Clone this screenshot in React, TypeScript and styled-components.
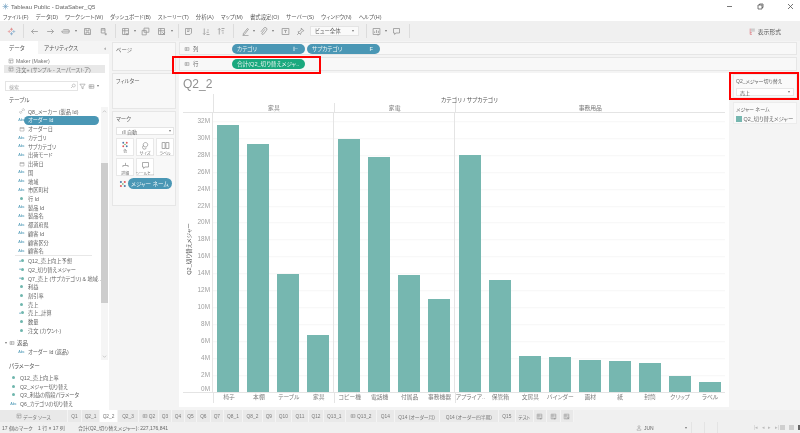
import React from "react";
import styled, { createGlobalStyle } from "styled-components";

const Global = createGlobalStyle`
  html, body { margin: 0; padding: 0; background: #f2f2f2; }
  * { box-sizing: border-box; }
  #root { width: 800px; height: 433px; }
`;

const FONT = `"Liberation Sans", "Noto Sans CJK JP", sans-serif`;
const BLUE = "#4a97b5";
const LINE = "#e4e4e4";

const Page = styled.div`
  position: relative; width: 800px; height: 433px; overflow: hidden;
  display: flex; flex-direction: column;
  background: #f4f4f4; font-family: ${FONT}; font-size: 5.6px; color: #5c5c5c;
  white-space: nowrap; font-feature-settings: "palt";
  filter: blur(0.25px);
`;
const TitleBar = styled.div`
  height: 12px; flex: none; background: #fff; display: flex; align-items: center; padding: 1px 0 0 2px; gap: 2px;
`;
const AppTitle = styled.span` font-size: 6px; color: #666; `;
const WinControls = styled.div`
  margin-left: auto; display: flex; width: 72px; margin-right: 2px; justify-content: space-between; padding: 0 4px 0 0; 
`;
const WinBtn = styled.svg` width: 7px; height: 7px; fill: none; stroke: #555; stroke-width: 0.8; `;
const MenuBar = styled.div`
  height: 9px; flex: none; background: #fff; display: flex; align-items: center; padding-left: 3px; gap: 7px;
`;
const MenuItem = styled.span` font-size: 5.4px; color: #5a5a5a; `;
const Toolbar = styled.div`
  height: 20px; background: #f0f0f0; display: flex; align-items: center; flex: none;
`;
const Slot = styled.div<{ $w: number }>`
  width: ${(p) => p.$w}px; flex: none; display: flex; justify-content: center; align-items: center; height: 100%;
`;
const ToolSep = styled.div<{ $l?: number; $r?: number }>`
  width: 1px; height: 14px; background: #dcdcdc; flex: none;
  margin: 0 ${(p) => p.$r ?? 0}px 0 ${(p) => p.$l ?? 0}px;
`;
const Ic = styled.svg<{ $s?: number }>`
  width: ${(p) => p.$s ?? 9}px; height: ${(p) => p.$s ?? 9}px; fill: none; stroke: #929292; stroke-width: 1; flex: none;
`;
const Caret = styled.span`
  width: 0; height: 0; border-left: 1.5px solid transparent; border-right: 1.5px solid transparent;
  border-top: 2px solid #777; display: inline-block; flex: none;
`;
const ViewSelect = styled.div`
  width: 49px; height: 10px; margin-left: 6px; background: #fafafa; border: 1px solid #e4e4e4;
  display: flex; align-items: center; justify-content: space-between; padding: 0 4px; font-size: 5.4px; color: #666; flex: none;
`;
const FormatBtn = styled.div`
  margin-left: auto; margin-right: 19px; display: flex; align-items: center; gap: 2px; font-size: 5.8px; color: #555;
`;
const Main = styled.div` flex: none; height: 369px; display: flex; `;
const LeftPane = styled.div` width: 109px; background: #fff; display: flex; flex-direction: column; flex: none; `;
const PaneTabs = styled.div` height: 13px; display: flex; flex: none; `;
const PaneTab = styled.div<{ $active?: boolean }>`
  width: ${(p) => (p.$active ? 38 : 71)}px; display: flex; align-items: center; gap: 0; justify-content: space-between;
  padding: 0 3px 0 ${(p) => (p.$active ? 9 : 6)}px; font-size: 5.6px; color: #555;
  background: ${(p) => (p.$active ? "#fff" : "#f4f4f4")};
`;
const SourceList = styled.div` padding: 3px 4px 0; display: flex; flex-direction: column; `;
const SourceRow = styled.div<{ $on?: boolean }>`
  height: 8px; display: flex; align-items: center; gap: 2px; padding-left: 4px; font-size: 5.2px; color: #777;
  background: ${(p) => (p.$on ? "#e8e8e8" : "transparent")};
`;
const SearchRow = styled.div` display: flex; align-items: center; margin: 8px 0 0 5px; `;
const SearchBox = styled.div`
  width: 73px; height: 10px; border: 1px solid #e4e4e4; display: flex; align-items: center; justify-content: space-between;
  padding: 0 1px 0 3px; color: #aaa; font-size: 5px;
`;
const SearchTools = styled.div` display: flex; align-items: center; gap: 2px; margin-left: 1px; `;
const SectionLabel = styled.div` height: 10px; margin: 4px 0 2px 9px; line-height: 10px; font-size: 5.6px; color: #555; flex: none; `;
const ListWrap = styled.div` flex: 1; min-height: 0; display: flex; overflow: hidden; `;
const FieldList = styled.div` flex: 1; min-width: 0; overflow: hidden; `;
const FieldRow = styled.div`
  height: 8.73px; display: flex; align-items: center; padding-left: 17px; font-size: 5.2px; color: #5f5f5f;
`;
const FieldName = styled.span<{ $sel?: boolean }>`
  margin-left: ${(p) => (p.$sel ? "-1px" : "2px")};
  ${(p) => p.$sel ? `background:${BLUE};color:#eef6f9;width:75px;height:9px;line-height:9px;border-radius:5px;padding-left:4px;margin-left:-2px;` : ""}
`;
const KindBox = styled.span`
  width: 9px; flex: none; display: flex; justify-content: center; align-items: center; font-size: 3.8px; color: #4a97b5;
`;
const Dot = styled.span` width: 3px; height: 3px; border-radius: 50%; background: #6fb6ad; display: block; `;
const FieldSep = styled.div` height: 1px; margin: 0 9px 0 15px; background: #e8e8e8; `;
const GroupRow = styled.div`
  height: 8.73px; margin-top: 4px; display: flex; align-items: center; gap: 2px; padding-left: 5px; font-size: 5.4px; color: #555;
`;
const ChildRow = styled(FieldRow)``;
const Scroll = styled.div`
  width: 7px; flex: none; background: #f5f5f5; display: flex; flex-direction: column; align-items: center; padding-top: 2px; margin-right: 1px;
  justify-content: space-between; position: relative; padding-bottom: 1px;
`;
const Thumb = styled.div` position: absolute; left: 0; right: 0; top: 56px; height: 140px; background: #cdcdcd; `;
const ParamPane = styled.div` height: 50px; flex: none; padding-top: 2px; background: #fff; `;
const ParamTitle = styled.div` height: 9px; line-height: 9px; padding-left: 9px; font-size: 5.6px; color: #555; margin-bottom: 2px; `;
const ParamRow = styled(FieldRow)` padding-left: 9px; `;
const Cards = styled.div` width: 64px; margin: 1px 0 0 3px; display: flex; flex-direction: column; gap: 2px; flex: none; `;
const Card = styled.div<{ $h: number }>`
  height: ${(p) => p.$h}px; background: #f8f8f8; border: 1px solid #e6e6e6; padding: 3px; font-size: 5.4px; color: #666; flex: none;
`;
const MarkSelect = styled.div`
  height: 8px; margin: 4px 0 3px 0; width: 58px; background: #fff; border: 1px solid #e4e4e4; display: flex; align-items: center;
  justify-content: space-between; padding: 0 2px 0 5px; font-size: 5px;
`;
const MarkGrid = styled.div` display: grid; grid-template-columns: repeat(3, 18.3px); gap: 2px 1.7px; `;
const MarkBtn = styled.div`
  height: 18px; background: #fff; border: 1px solid #e8e8e8; display: flex; flex-direction: column; align-items: center;
  justify-content: space-between; padding: 2px 0 1px; font-size: 4px; color: #777;
`;
const MarkPillRow = styled.div` display: flex; align-items: center; gap: 1px; margin: 2px 0 0 3px; `;
const MarkPill = styled.div`
  width: 46px; height: 11px; border-radius: 6px; background: ${BLUE}; color: #eef6f9; font-size: 5.6px;
  display: flex; align-items: center; justify-content: center;
`;
const Right = styled.div` flex: 1; min-width: 0; margin: 1px 3px 0 3px; display: flex; flex-direction: column; `;
const Shelf = styled.div<{ $h: number; $mb: number }>`
  height: ${(p) => p.$h}px; margin-bottom: ${(p) => p.$mb}px; background: #f8f8f8; border: 1px solid #e6e6e6; display: flex; align-items: center; gap: 2px; flex: none;
`;
const ShelfLabel = styled.div`
  width: 50px; display: flex; align-items: center; gap: 3px; padding-left: 4px; font-size: 5.4px; color: #666;
`;
const Pill = styled.div<{ $c: string }>`
  width: 73px; height: 10px; border-radius: 6px; background: ${(p) => p.$c}; color: #eef6f4; font-size: 5.6px;
  display: flex; align-items: center; justify-content: space-between; padding: 0 7px 0 5px;
`;
const Lower = styled.div` flex: 1; min-height: 0; display: flex; `;
const View = styled.div` width: 550px; height: 334px; background: #fff; padding: 0 4px; display: flex; flex-direction: column; flex: none; `;
const SheetTitle = styled.div` height: 21px; font-size: 12px; color: #8f8f8f; padding-top: 3px; line-height: 17px; flex: none; `;
const ChartHead = styled.div` margin-left: 30px; border-left: 1px solid ${LINE}; flex: none; `;
const HeadTitle = styled.div` height: 9px; line-height: 12px; text-align: center; font-size: 5.8px; color: #555; `;
const CatRow = styled.div` height: 9px; display: flex; `;
const CatCell = styled.div<{ $n: number }>`
  flex: ${(p) => p.$n} 0 0; text-align: center; line-height: 10px; font-size: 5.8px; color: #777;
  & + & { border-left: 1px solid ${LINE}; }
`;
const Plot = styled.div` height: 281px; display: flex; border-top: 1px solid ${LINE}; border-bottom: 1px solid ${LINE}; flex: none; `;
const Axis = styled.div` width: 30px; display: flex; flex: none; border-right: 1px solid ${LINE}; `;
const AxisTitleBox = styled.div` width: 11px; display: flex; align-items: center; justify-content: center; padding: 0 0 8px 0; flex: none; `;
const AxisTitle = styled.span` transform: rotate(-90deg); font-size: 5.6px; color: #555; display: block; `;
const Ticks = styled.div` flex: 1; display: flex; flex-direction: column; padding-right: 2px; `;
const Tick = styled.div` height: 16.92px; line-height: 16.92px; text-align: right; font-size: 6.4px; color: #a0a0a0; flex: none; `;
const ZeroTick = styled(Tick)` height: 10px; line-height: 10px; `;
const Pane = styled.div<{ $n: number }>`
  flex: ${(p) => p.$n} 0 0; display: flex; align-items: flex-end; min-width: 0;
  background-image: repeating-linear-gradient(to bottom, transparent 0, transparent 15.92px, #f6f6f6 15.92px, #f6f6f6 16.92px);
  background-position: 0 -7.8px;
  & + & { border-left: 1px solid ${LINE}; }
`;
const BarSlot = styled.div` flex: 1; display: flex; justify-content: center; min-width: 0; `;
const Bar = styled.div` width: 22.5px; background: #76b7b0; `;
const LabelsRow = styled.div` height: 10px; margin-left: 30px; display: flex; border-left: 1px solid ${LINE}; flex: none; `;
const LabelGroup = styled.div<{ $n: number }>`
  flex: ${(p) => p.$n} 0 0; display: flex; min-width: 0;
  & + & { border-left: 1px solid ${LINE}; }
`;
const BarLabel = styled.div` flex: 1; min-width: 0; text-align: center; line-height: 9px; font-size: 5.8px; color: #7c7c7c; `;
const Legends = styled.div` width: 64px; margin: 1px 0 0 4px; display: flex; flex-direction: column; gap: 4px; flex: none; `;
const LegendCard = styled.div<{ $h: number }>`
  height: ${(p) => p.$h}px; background: #fafafa; border: 1px solid #ececec; padding: 2px 2px; font-size: 5px; color: #666; flex: none;
`;
const FilterSelect = styled.div`
  height: 8px; margin-top: 4px; background: #fff; border: 1px solid #e8e8e8; display: flex; align-items: center; justify-content: space-between;
  padding: 0 3px; font-size: 5px; color: #555;
`;
const LegendRow = styled.div` display: flex; align-items: center; gap: 2px; margin-top: 3px; font-size: 5.4px; color: #666; `;
const Swatch = styled.span` width: 5.5px; height: 5.5px; background: #76b7b0; flex: none; `;
const TabsBar = styled.div` height: 12px; flex: none; display: flex; background: #f0f0f0; `;
const SheetTab = styled.div<{ $w: number; $active?: boolean }>`
  width: ${(p) => p.$w}px; flex: none; display: flex; align-items: center; justify-content: center; gap: 1px;
  font-size: 4.8px; color: #777; border-right: 1px solid #f4f4f4;
  background: ${(p) => (p.$active ? "#fff" : "#e9e9e9")};
`;
const StatusBar = styled.div` height: 11px; flex: none; display: flex; align-items: center; background: #f0f0f0; font-size: 5px; color: #666; padding-left: 2px; `;
const StatusText = styled.span<{ $w: number }>` width: ${(p) => p.$w}px; flex: none; `;
const StatusTotal = styled.span` width: 92px; flex: none; `;
const UserBox = styled.div`
  margin-left: 458px; width: 63px; display: flex; align-items: center; gap: 2px; padding-left: 8px; padding-right: 4px; flex: none;
`;
const StatusCell = styled.div` width: 13px; height: 100%; border-left: 1px solid #e4e4e4; flex: none; `;
const Pager = styled.div` margin-left: 24px; display: flex; gap: 3.5px; align-items: center; color: #bbb; font-size: 4.5px; width: 26px; flex: none; `;
const ViewModes = styled.div` display: flex; gap: 4px; align-items: center; flex: none; `;
const Mode = styled.span<{ $on?: boolean }>` width: 5px; height: 5px; background: ${(p) => (p.$on ? "#666" : "#cfcfcf")}; display: block; `;
const RedBox = styled.div<{ $x: number; $y: number; $w: number; $h: number }>`
  position: absolute; left: ${(p) => p.$x}px; top: ${(p) => p.$y}px; width: ${(p) => p.$w}px; height: ${(p) => p.$h}px;
  border: 2px solid #f00; pointer-events: none;
`;

const Logo = () => (
  <Ic $s={9} viewBox="0 0 12 12" style={{ strokeWidth: 1.1 }}>
    <path d="M6 1v4M4 3h4" stroke="#e08a8a" />
    <path d="M6 7v4M4 9h4" stroke="#86aacb" />
    <path d="M3 4v4M1 6h4" stroke="#e8a5a5" />
    <path d="M9 4v4M7 6h4" stroke="#9bbbd3" />
  </Ic>
);
const Glyph = ({ d, s }: { d: string; s?: number }) => (
  <Ic $s={s} viewBox="0 0 12 12"><path d={d} /></Ic>
);
const P = {
  back: "M10.5 6H2M5 3 2 6l3 3",
  fwd: "M1.5 6H10M7 3l3 3-3 3",
  swap: "M1 5.5h10M3 3.5h6.5a1.5 1.5 0 0 1 1.5 1.5v1.5a1.5 1.5 0 0 1-1.5 1.5h-6a2.5 2.5 0 0 1-2.5-2.5",
  save: "M2 2h7l1 1v7H2zM4 2v3h4V2M4 10V7h4v3",
  addData: "M3 2h5v6H3zM3 4h5M9 8v3M7.5 9.5h3",
  sheet: "M2 2h8v8H2zM2 5h8M5 2v8M8 8v3M6.5 9.5h3",
  dup: "M4 1.5h6.5V7H4zM1.5 4.5H7V10.5H1.5z",
  clear: "M2 2h8v8H2zM2 5h8M5 2v8M7 7l3.5 3.5M10.5 7 7 10.5",
  story: "M2 2h8v6l-2 2H2zM4 4h4M4 6h3",
  asc: "M3 2v8M1.5 8.5 3 10l1.5-1.5M6 10h4M6 7h3M7 4h2",
  desc: "M3 2v8M1.5 3.5 3 2l1.5 1.5M6 2h4M6 5h3M7 8h2",
  pen: "M3 9l5.5-7 1.5 1L4.5 10 3 10.5zM2 11.5h8",
  clip: "M8 3 4 8a1.2 1.2 0 0 0 2 1.5l4-5a2.3 2.3 0 0 0-3.6-3L2.5 6.5",
  tbox: "M1.5 2h9v8h-9zM4 4.5h4M6 4.5V8",
  pin: "M7 1.5l3.5 3.5-2 .5-2 2.5-.5 2L2.5 6.5l2-.5 2.5-2zM4 8 1.5 10.5",
  chart: "M1.5 2h9v8h-9zM3.5 8V6M6 8V4M8.5 8V5M8 9v2.5",
  tip: "M2 2h8v6H5L3.5 10V8H2z",
  search: "M7.5 2a3 3 0 1 1-.1 0M5 7 2 10",
  funnel: "M1.5 2h9L7 6.5V10l-2-1V6.5z",
  grid: "M2 3h8v6H2zM2 6h8M5 3v6",
  cal: "M2 3h8v7H2zM2 5h8",
  link: "M4 8l4-4M3 6 2 7a2 2 0 0 0 3 3l1-1M9 6l1-1a2 2 0 0 0-3-3L6 3",
  db: "M2 2h8v8H2zM2 5h8M5 5v5",
  user: "M6 1.5a2 2 0 1 1-.1 0M2 10.5c0-5 8-5 8 0z",
  size: "M6 2a3 3 0 1 1-.1 0M4 6a2.5 2.5 0 1 0 3 3",
  label: "M1.5 2h4v8h-4zM6.5 2h4v8h-4z",
  detail: "M6 2.5v3M2.5 8v-2h7v2M2.5 9h.1M6 9h.1M9.5 9h.1",
};

const Colors = () => (
  <svg width="8" height="8" viewBox="0 0 12 12">
    <circle cx="3" cy="3" r="1.6" fill="#4e79a7" />
    <circle cx="9" cy="3" r="1.6" fill="#e15759" />
    <circle cx="3" cy="9" r="1.6" fill="#e15759" />
    <circle cx="9" cy="9" r="1.6" fill="#4e79a7" />
    <circle cx="6" cy="6" r="1.2" fill="#59a14f" />
  </svg>
);

const dims = ["カテゴリ","サブカテゴリ","出荷モード","出荷日:d","国","地域","市区町村","行 Id:m","製品 Id","製品名","都道府県","顧客 Id","顧客区分","顧客名"];
const measures: [string, boolean][] = [["Q12_売上向上予想",true],["Q2_切り替えメジャー",true],["Q7_売上 (サブカテゴリ) & 地域…",true],["利益",false],["割引率",false],["売上",false],["売上_計算",true],["数量",false],["注文 (カウント)",false]];

const bars = [
  { n: 4, cat: "家具", items: [["椅子",125],["本棚",144],["テーブル",274],["家具",335]] },
  { n: 4, cat: "家電", items: [["コピー機",139],["電話機",157],["付属品",275],["事務機器",299]] },
  { n: 9, cat: "事務用品", items: [["アプライア..",155],["保管箱",280],["文房具",356],["バインダー",357],["画材",360],["紙",361],["封筒",363],["クリップ",376],["ラベル",382]] },
] as { n: number; cat: string; items: [string, number][] }[];

const tabs: [string, number, boolean?][] = [
  ["Q1",14],["Q2_1",18],["Q2_2",18,true],["Q2_3",21],["Q2",20,false],["Q3",13],["Q4",13],["Q5",12],["Q6",13.7],["Q7",13.3],["Q8_1",19],["Q8_2",20],["Q9",12.7],["Q10",16.3],["Q11",17],["Q12",15],["Q13_1",21.7],["Q13_2",31.3],["Q14",17.7],["Q14 (オーダー月)",45],["Q14 (オーダー四半期)",59.3],["Q15",16.7],["テスト",18.3],
];

export default function App() {
  const ticks = Array.from({ length: 16 }, (_, i) => `${32 - i * 2}M`);
  return (
    <Page>
      <Global />
      <TitleBar>
        <Ic $s={7} viewBox="0 0 12 12" style={{ stroke: "#6d9dc0" }}><path d="M6 1v10M1 6h10M2.5 2.5l7 7M9.5 2.5l-7 7" /></Ic>
        <AppTitle>Tableau Public - DataSaber_Q5</AppTitle>
        <WinControls>
          <WinBtn viewBox="0 0 7 7"><path d="M1 3.5h5" /></WinBtn>
          <WinBtn viewBox="0 0 7 7"><path d="M1 2h4v4H1zM2.5 2V1H6v3.5H5" /></WinBtn>
          <WinBtn viewBox="0 0 7 7"><path d="M1 1l5 5M6 1 1 6" /></WinBtn>
        </WinControls>
      </TitleBar>
      <MenuBar>
        {["ファイル(F)","データ(D)","ワークシート(W)","ダッシュボード(B)","ストーリー(T)","分析(A)","マップ(M)","書式設定(O)","サーバー(S)","ウィンドウ(N)","ヘルプ(H)"].map((m) => <MenuItem key={m}>{m}</MenuItem>)}
      </MenuBar>
      <Toolbar>
        <Slot $w={23}><Logo /></Slot>
        <ToolSep />
        <Slot $w={20}><Glyph d={P.back} /></Slot>
        <Slot $w={13}><Glyph d={P.fwd} /></Slot>
        <Slot $w={16}><Glyph d={P.swap} /></Slot>
        <Slot $w={6}><Caret /></Slot>
        <Slot $w={16}><Glyph d={P.save} /></Slot>
        <Slot $w={16}><Glyph d={P.addData} /></Slot>
        <ToolSep $l={4} $r={1} />
        <Slot $w={16}><Glyph d={P.sheet} /></Slot>
        <Slot $w={4}><Caret /></Slot>
        <Slot $w={16}><Glyph d={P.dup} /></Slot>
        <Slot $w={16}><Glyph d={P.clear} /></Slot>
        <Slot $w={5}><Caret /></Slot>
        <ToolSep $l={4} $r={1} />
        <Slot $w={16}><Glyph d={P.story} /></Slot>
        <Slot $w={3} />
        <Slot $w={15}><Glyph d={P.asc} /></Slot>
        <Slot $w={15}><Glyph d={P.desc} /></Slot>
        <ToolSep $l={4} $r={3} />
        <Slot $w={16}><Glyph d={P.pen} /></Slot>
        <Slot $w={1}><Caret /></Slot>
        <Slot $w={18}><Glyph d={P.clip} /></Slot>
        <Slot $w={2}><Caret /></Slot>
        <Slot $w={22}><Glyph d={P.tbox} /></Slot>
        <Slot $w={8}><Glyph d={P.pin} /></Slot>
        <ViewSelect>ビュー全体<Caret /></ViewSelect>
        <ToolSep $l={7} $r={2} />
        <Slot $w={14}><Glyph d={P.chart} /></Slot>
        <Slot $w={6}><Caret /></Slot>
        <Slot $w={14}><Glyph d={P.tip} /></Slot>
        <ToolSep $l={6} />
        <FormatBtn>
          <Ic $s={7} viewBox="0 0 12 12">
            <path d="M3 2h7M3 5h7" />
            <path d="M2 1v10M2 8h3M2 11h3" stroke="#d9636a" />
          </Ic>
          表示形式
        </FormatBtn>
      </Toolbar>
      <Main>
        <LeftPane>
          <PaneTabs>
            <PaneTab $active>データ</PaneTab>
            <PaneTab>アナリティクス<span>‹</span></PaneTab>
          </PaneTabs>
          <SourceList>
            <SourceRow><Glyph d={P.db} s={6} />Maker (Maker)</SourceRow>
            <SourceRow $on><Glyph d={P.db} s={6} />注文+ (サンプル - スーパーストア)</SourceRow>
          </SourceList>
          <SearchRow>
            <SearchBox>検索<Glyph d={P.search} s={6} /></SearchBox>
            <SearchTools><Glyph d={P.funnel} s={7} /><Glyph d={P.grid} s={7} /><Caret /></SearchTools>
          </SearchRow>
          <SectionLabel>テーブル</SectionLabel>
          <ListWrap>
            <FieldList>
              <FieldRow><KindBox><Glyph d={P.link} s={6} /></KindBox><FieldName>Q8_メーカー (製品 Id)</FieldName></FieldRow>
              <FieldRow><KindBox>Abc</KindBox><FieldName $sel>オーダー Id</FieldName></FieldRow>
              <FieldRow><KindBox><Glyph d={P.cal} s={6} /></KindBox><FieldName>オーダー日</FieldName></FieldRow>
              {dims.map((d) => {
                const [name, kind] = d.split(":");
                return (
                  <FieldRow key={d}>
                    <KindBox>{kind === "d" ? <Glyph d={P.cal} s={6} /> : kind === "m" ? <Dot /> : "Abc"}</KindBox>
                    <FieldName>{name}</FieldName>
                  </FieldRow>
                );
              })}
              <FieldSep />
              {measures.map(([m, calc]) => (
                <FieldRow key={m}>
                  <KindBox>{calc ? "=" : ""}<Dot /></KindBox>
                  <FieldName>{m}</FieldName>
                </FieldRow>
              ))}
              <GroupRow><Caret /><Glyph d={P.grid} s={6} />返品</GroupRow>
              <ChildRow><KindBox>Abc</KindBox><FieldName>オーダー Id (返品)</FieldName></ChildRow>
            </FieldList>
            <Scroll>
              <Thumb />
              <Ic $s={5} viewBox="0 0 12 12"><path d="M2 8l4-4 4 4" /></Ic>
              <Ic $s={5} viewBox="0 0 12 12"><path d="M2 4l4 4 4-4" /></Ic>
            </Scroll>
          </ListWrap>
          <ParamPane>
            <ParamTitle>パラメーター</ParamTitle>
            {["Q12_売上向上率","Q2_メジャー切り替え","Q3_利益の階段パラメータ"].map((t) => (
              <ParamRow key={t}><KindBox><Dot /></KindBox><FieldName>{t}</FieldName></ParamRow>
            ))}
            <ParamRow><KindBox>Abc</KindBox><FieldName>Q6_カテゴリの切り替え</FieldName></ParamRow>
          </ParamPane>
        </LeftPane>
        <Cards>
          <Card $h={29}>ページ</Card>
          <Card $h={36}>フィルター</Card>
          <Card $h={95}>
            マーク
            <MarkSelect><span>ıll 自動</span><Caret /></MarkSelect>
            <MarkGrid>
              <MarkBtn><Colors />色</MarkBtn>
              <MarkBtn><Glyph d={P.size} />サイズ</MarkBtn>
              <MarkBtn><Glyph d={P.label} />ラベル</MarkBtn>
              <MarkBtn><Glyph d={P.detail} />詳細</MarkBtn>
              <MarkBtn><Glyph d={P.tip} />ツールヒ...</MarkBtn>
            </MarkGrid>
            <MarkPillRow><Colors /><MarkPill>メジャー ネーム</MarkPill></MarkPillRow>
          </Card>
        </Cards>
        <Right>
          <Shelf $h={13} $mb={2}>
            <ShelfLabel><Glyph d={P.grid} s={6} />列</ShelfLabel>
            <Pill $c={BLUE}><span>カテゴリ</span><span>⊩</span></Pill>
            <Pill $c={BLUE}><span>サブカテゴリ</span><span>F</span></Pill>
          </Shelf>
          <Shelf $h={14} $mb={2}>
            <ShelfLabel><Glyph d={P.grid} s={6} />行</ShelfLabel>
            <Pill $c="#1aa97e"><span>合計(Q2_切り替えメジャ..</span></Pill>
          </Shelf>
          <Lower>
            <View>
              <SheetTitle>Q2_2</SheetTitle>
              <ChartHead>
                <HeadTitle>カテゴリ / サブカテゴリ</HeadTitle>
                <CatRow>{bars.map((g) => <CatCell key={g.cat} $n={g.n}>{g.cat}</CatCell>)}</CatRow>
              </ChartHead>
              <Plot>
                <Axis>
                  <AxisTitleBox><AxisTitle>Q2_切り替えメジャー</AxisTitle></AxisTitleBox>
                  <Ticks>
                    {ticks.map((t) => <Tick key={t}>{t}</Tick>)}
                    <ZeroTick>0M</ZeroTick>
                  </Ticks>
                </Axis>
                {bars.map((g) => (
                  <Pane key={g.cat} $n={g.n}>
                    {g.items.map(([name, top]) => (
                      <BarSlot key={name}><Bar style={{ height: 392 - top }} /></BarSlot>
                    ))}
                  </Pane>
                ))}
              </Plot>
              <LabelsRow>
                {bars.map((g) => (
                  <LabelGroup key={g.cat} $n={g.n}>
                    {g.items.map(([name]) => <BarLabel key={name}>{name}</BarLabel>)}
                  </LabelGroup>
                ))}
              </LabelsRow>
            </View>
            <Legends>
              <LegendCard $h={24}>
                Q2_メジャー切り替え
                <FilterSelect>売上<Caret /></FilterSelect>
              </LegendCard>
              <LegendCard $h={22}>
                メジャー ネーム
                <LegendRow><Swatch />Q2_切り替えメジャー</LegendRow>
              </LegendCard>
            </Legends>
          </Lower>
        </Right>
      </Main>
      <TabsBar>
        <SheetTab $w={68}><Glyph d={P.db} s={6} />データ ソース</SheetTab>
        {tabs.map(([t, w, a], i) => (
          <SheetTab key={t + i} $w={w} $active={!!a}>
            {(t === "Q2" || t === "Q13_2") && <Glyph d={P.grid} s={6} />}{t}
          </SheetTab>
        ))}
        <SheetTab $w={13}><Glyph d={P.sheet} s={7} /></SheetTab>
        <SheetTab $w={14}><Glyph d={P.sheet} s={7} /></SheetTab>
        <SheetTab $w={13}><Glyph d={P.clear} s={7} /></SheetTab>
      </TabsBar>
      <StatusBar>
        <StatusText $w={36}>17 個のマーク</StatusText>
        <StatusText $w={40}>1 行 × 17 列</StatusText>
        <StatusTotal>合計(Q2_切り替えメジャー): 227,176,841</StatusTotal>
        <UserBox><Glyph d={P.user} s={6} /><span>JUN</span><Caret style={{ marginLeft: "auto" }} /></UserBox>
        <StatusCell /><StatusCell /><StatusCell />
        <Pager><span>|◂</span><span>◂</span><span>▸</span><span>▸|</span></Pager>
        <ViewModes><Mode /><Mode /><Mode $on /></ViewModes>
      </StatusBar>
      <RedBox $x={172} $y={56} $w={149} $h={18} />
      <RedBox $x={729} $y={72} $w={70} $h={28} />
    </Page>
  );
}
